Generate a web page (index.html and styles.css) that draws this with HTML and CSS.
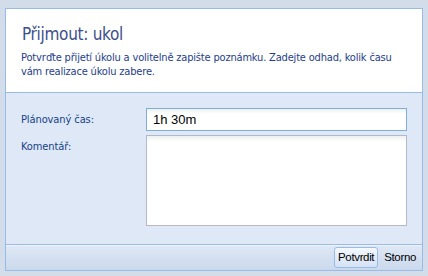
FILE: index.html
```html
<!DOCTYPE html>
<html lang="cs">
<head>
<meta charset="utf-8">
<link rel="stylesheet" href="styles.css">
</head>
<body>
<div class="win">
  <div class="head">
    <div class="title">Přijmout: ukol</div>
    <div class="desc">Potvrďte přijetí úkolu a volitelně zapište poznámku. Zadejte odhad, kolik času vám realizace úkolu zabere.</div>
  </div>
  <div class="form">
    <div class="row">
      <label class="lbl">Plánovaný čas:</label>
      <div class="field">1h 30m</div>
    </div>
    <div class="row">
      <label class="lbl">Komentář:</label>
      <div class="area"></div>
    </div>
  </div>
  <div class="bar">
    <span class="btn">Potvrdit</span>
    <span class="btn plain">Storno</span>
  </div>
</div>
</body>
</html>
```
FILE: styles.css
```css
html, body { margin: 0; padding: 0; }
body {
  background: #d3dde9;
  width: 428px;
  height: 276px;
  overflow: hidden;
  font-family: "DejaVu Sans Condensed", "DejaVu Sans", sans-serif;
}
.win {
  margin: 8px 5px 0 5px;
  width: 416px;
  height: 261px;
  border: 1px solid #99bbe8;
  display: flex;
  flex-direction: column;
  background: #dfe8f6;
}
.head {
  background: #fff;
  border-bottom: 1px solid #99bbe8;
  padding: 0 16px 0 15px;
  box-sizing: border-box;
  height: 84px;
  color: #15428b;
}
.title {
  font-size: 17px;
  padding-top: 14px;
  line-height: 22px;
  color: #3c4f8d;
  padding-left: 1px;
  letter-spacing: -0.3px;
}
.desc {
  margin-top: 6px;
  font-size: 11px;
  line-height: 14px;
  color: #1e3d8c;
  letter-spacing: -0.18px;
}
.form {
  height: 151px;
  padding: 15px 15px 0 15px;
  box-sizing: border-box;
}
.row { display: flex; align-items: flex-start; margin-bottom: 4px; }
.lbl {
  width: 125px;
  font-size: 11px;
  color: #15428b;
  padding-top: 5px;
  letter-spacing: -0.1px;
}
.field {
  width: 261px;
  height: 23px;
  box-sizing: border-box;
  border: 1px solid #7eadd9;
  background: linear-gradient(#eef0f0, #fff 5px);
  font-family: "Liberation Sans", Arial, sans-serif;
  font-size: 13px;
  line-height: 21px;
  padding-left: 6px;
  color: #000;
}
.area {
  width: 261px;
  height: 91px;
  box-sizing: border-box;
  border: 1px solid #b5b8c8;
  background: linear-gradient(#eef0f0, #fff 6px);
}
.bar {
  flex: 1;
  border-top: 1px solid #99bbe8;
  box-shadow: inset 0 1px 0 #eef3fa;
  background: linear-gradient(#dfe8f6, #cad9ec);
  display: flex;
  align-items: center;
  justify-content: flex-end;
  padding-right: 2px;
  gap: 2px;
}
.btn {
  font-family: "Liberation Sans", Arial, sans-serif;
  font-size: 11.5px;
  height: 21px;
  line-height: 19px;
  box-sizing: border-box;
  padding: 0 3px;
  border: 1px solid #99bbe8;
  border-radius: 3px;
  background: linear-gradient(#f4f8fd, #d4e2f4);
  color: #000;
  letter-spacing: -0.35px;
}
.btn.plain {
  border-color: transparent;
  background: none;
}
```
